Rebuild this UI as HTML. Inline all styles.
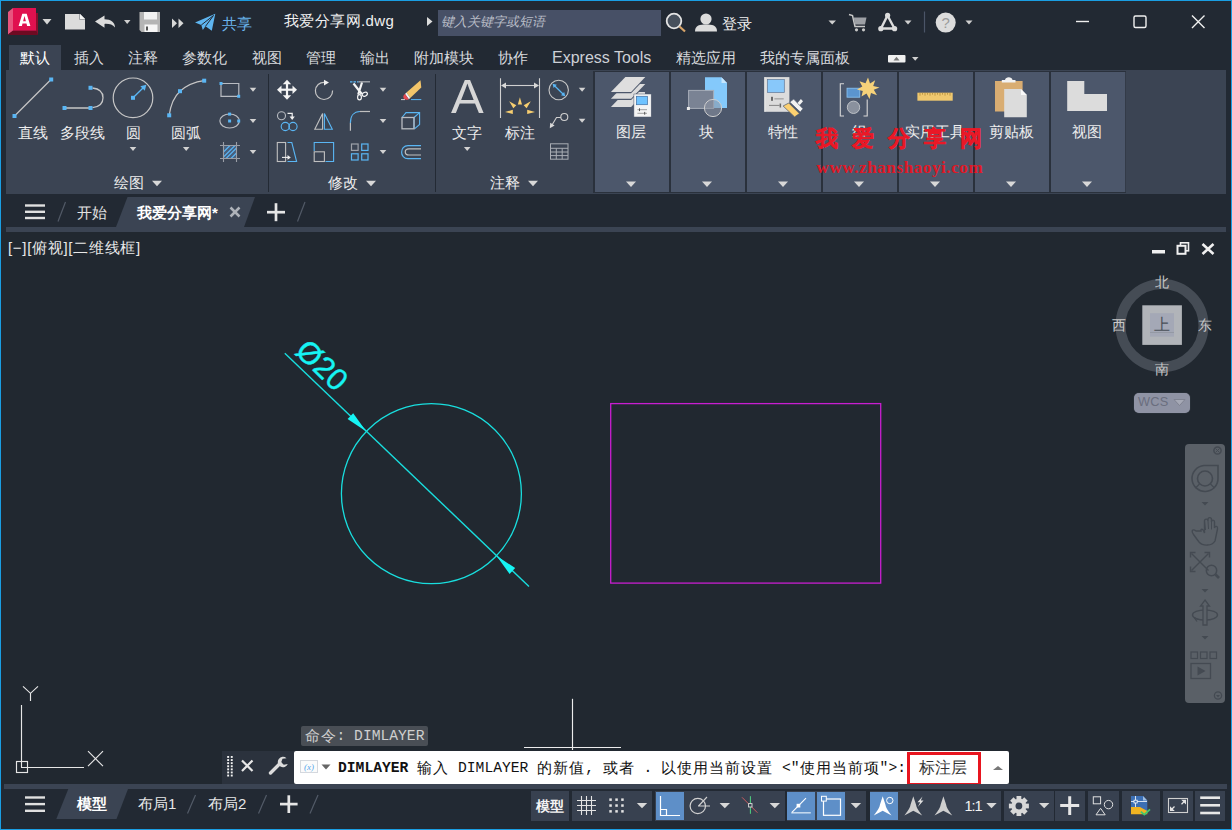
<!DOCTYPE html>
<html lang="zh">
<head>
<meta charset="utf-8">
<title>AutoCAD</title>
<style>
html,body{margin:0;padding:0;}
body{width:1232px;height:830px;overflow:hidden;background:#222933;font-family:"Liberation Sans",sans-serif;color:#e4e4e4;}
#win{position:absolute;left:0;top:0;width:1232px;height:830px;background:#222933;overflow:hidden;}
.a{position:absolute;white-space:nowrap;}
.t{position:absolute;white-space:nowrap;line-height:1;}
svg{position:absolute;overflow:visible;}
/* frame */
#bt{left:0;top:0;width:1232px;height:1px;background:#1a9ee3;}
#bl{left:0;top:0;width:1px;height:830px;background:#1a9ee3;}
#br{left:1231px;top:0;width:1px;height:830px;background:#1a9ee3;}
#bb{left:0;top:829px;width:1232px;height:1px;background:#1a9ee3;}
/* ribbon */
#rtabA{left:9px;top:45px;width:52px;height:26px;background:#3b4453;}
#ribbon{left:6px;top:70px;width:1220px;height:124px;background:#3b4453;}
.rt{top:50px;font-size:15px;color:#d8dade;}
.pb{top:72px;width:74px;height:120px;background:#4c576b;}
.sep{top:72px;width:2px;height:120px;background:#2a313c;}
.lbl{font-size:15px;color:#ededed;}
/* doc tabs */
#tabband{left:6px;top:227px;width:1220px;height:5px;background:#3b4453;}
/* drawing */
#draw{left:1px;top:232px;width:1230px;height:553px;background:#212830;}
.sb{top:791px;height:30px;background:#384150;}
.sbb{top:792px;width:28px;height:28px;background:#5e8fc8;}
.cl{top:761px;font-family:'Liberation Mono',monospace;font-size:14.670px;color:#111;}
.cc{top:760px;font-size:15px;color:#111;letter-spacing:1px;}
#stband{left:4px;top:784px;width:1223px;height:5px;background:#3b4453;}
</style>
</head>
<body>
<div id="win">

<!-- ===== TITLE BAR ===== -->
<div id="title" class="a" style="left:0;top:0;width:1232px;height:45px;">
  <div class="t" style="left:222px;top:16px;font-size:15px;color:#6ab4ec;width:30.0px;text-align:center;">共享</div>
  <div class="t" style="left:284px;top:13px;font-size:15px;letter-spacing:0.400px;color:#f0f0f0;width:110.3px;text-align:center;">我爱分享网.dwg</div>
  <div class="a" style="left:438px;top:10px;width:223px;height:26px;background:#475066;"></div>
  <div class="t" style="left:441px;top:15px;font-size:13px;font-style:italic;color:#b9bdc6;width:104.0px;text-align:center;">键入关键字或短语</div>
  <div class="t" style="left:722px;top:16px;font-size:15px;color:#f0f0f0;width:30.0px;text-align:center;">登录</div>
  
  <svg style="left:0;top:0;" width="1232" height="45">
    <!-- A logo -->
    <polygon points="8,12 13,8 13,31 8,34.500" fill="#e8557e"/>
    <polygon points="8,34.500 13,30.500 36,30.500 38,35 11,35" fill="#6e0a22"/>
    <polygon points="36,13 38,13 38,35 36,30.500" fill="#8a0e2c"/>
    <rect x="13" y="8" width="23" height="22.700" fill="#e0114f"/>
    <path d="M18.600,26 L22.300,13.800 L26.700,13.800 L30.400,26 L27.100,26 L26.500,23.600 L22.500,23.600 L21.900,26 Z M23.100,21.200 L25.900,21.200 L24.500,16 Z" fill="#ffffff" fill-rule="evenodd"/>
    <polygon points="42.500,19 51.500,19 47,24.500" fill="#d6d6d6"/>
    <!-- new -->
    <path d="M65,14 L80,14 L85,19 L85,29.500 L65,29.500 Z" fill="#dcdcdc"/>
    <path d="M80,14 L80,19 L85,19 Z" fill="#f6f6f6"/>
    <path d="M79.500,14 L79.500,19.500 L85,19.500" fill="none" stroke="#8e9196" stroke-width="0.8"/>
    <!-- undo -->
    <path d="M95,21.500 L104.500,15.500 L104.500,19.300 C111,19.300 115,22.500 115,27.500 C112.500,24.500 109.500,23.700 104.500,23.900 L104.500,27.800 Z" fill="#dcdcdc"/>
    <polygon points="124,20 130.500,20 127.200,24" fill="#d0d0d0"/>
    <!-- save -->
    <path d="M139.500,12 L160,12 L160,32 L141.500,32 L139.500,30 Z" fill="#b4b4b4"/>
    <rect x="144" y="12" width="13" height="7.500" fill="#f2f2f2"/>
    <rect x="144.500" y="24.500" width="13" height="7.500" fill="#f6f6f6"/>
    <rect x="146" y="26.500" width="2" height="4" fill="#555"/>
    <!-- >> -->
    <polygon points="172,18.500 177,23.300 172,28" fill="#d8d8d8"/>
    <polygon points="178.500,18.500 183.500,23.300 178.500,28" fill="#d8d8d8"/>
    <!-- share plane -->
    <path d="M195,22.500 L215.300,13.800 L211.800,30.800 L205.500,26.300 L202.800,30 L201.300,25 Z" fill="#5eb5f0"/>
    <path d="M201.300,25 L213.500,15.500 L205.500,26.300" fill="none" stroke="#222933" stroke-width="1"/>
    <polygon points="427,17 432.500,21.500 427,26" fill="#dcdcdc"/>
    <!-- search -->
    <circle cx="674" cy="21" r="7.300" fill="#47505c" stroke="#e4e4e4" stroke-width="1.8"/>
    <line x1="679.500" y1="26.500" x2="685" y2="31.500" stroke="#d8a469" stroke-width="2.200"/>
    <!-- person -->
    <circle cx="706" cy="19" r="5.600" fill="#dcdcdc"/>
    <path d="M695,31.500 C695,25 700,24.500 706,24.500 C712,24.500 717,25 717,31.500 Z" fill="#dcdcdc"/>
    <polygon points="828.500,20.500 836,20.500 832.200,24.500" fill="#d0d0d0"/>
    <!-- cart -->
    <path d="M849,14.500 L852.500,15.500 L855,26.500 L865,26.500" fill="none" stroke="#c8c8c8" stroke-width="1.500"/>
    <polygon points="853.500,17.500 866.500,17.500 865,24.500 855,24.500" fill="#9da0a5"/>
    <circle cx="856.500" cy="29.800" r="1.600" fill="#c8c8c8"/><circle cx="863.500" cy="29.800" r="1.600" fill="#c8c8c8"/>
    <!-- app triangle -->
    <path d="M887.500,15.500 L881,28.500 L894.500,28.500 Z" fill="none" stroke="#dcdcdc" stroke-width="2.400" stroke-linejoin="round"/>
    <circle cx="887.600" cy="15.300" r="2.600" fill="#dcdcdc"/><circle cx="880.800" cy="28.700" r="2.600" fill="#dcdcdc"/><circle cx="894.600" cy="28.700" r="2.600" fill="#dcdcdc"/>
    <polygon points="904.500,20.500 911.500,20.500 908,24.500" fill="#d0d0d0"/>
    <line x1="924.500" y1="11.500" x2="924.500" y2="32.500" stroke="#4b5567" stroke-width="1.200"/>
    <!-- help -->
    <circle cx="945.700" cy="22.600" r="10" fill="#dcdcdc"/>
    <text x="945.700" y="28" text-anchor="middle" font-family="Liberation Sans" font-size="15" fill="#9a9a9a">?</text>
    <polygon points="965.500,20.500 972.500,20.500 969,24.500" fill="#d0d0d0"/>
    <!-- window controls -->
    <line x1="1076" y1="21.500" x2="1089" y2="21.500" stroke="#f0f0f0" stroke-width="1.400"/>
    <rect x="1134" y="16" width="12" height="11.500" rx="1.500" fill="none" stroke="#f0f0f0" stroke-width="1.400"/>
    <path d="M1192,15.500 L1204.500,28 M1204.500,15.500 L1192,28" stroke="#f0f0f0" stroke-width="1.400" fill="none"/>
  </svg>

</div>

<!-- ===== RIBBON TABS ===== -->
<div id="rtabA" class="a"></div>
<div class="t rt" style="left:20px;color:#ffffff;width:30.0px;text-align:center;">默认</div>
<div class="t rt" style="left:74px;width:30.0px;text-align:center;">插入</div>
<div class="t rt" style="left:128px;width:30.0px;text-align:center;">注释</div>
<div class="t rt" style="left:182px;width:45.0px;text-align:center;">参数化</div>
<div class="t rt" style="left:252px;width:30.0px;text-align:center;">视图</div>
<div class="t rt" style="left:306px;width:30.0px;text-align:center;">管理</div>
<div class="t rt" style="left:360px;width:30.0px;text-align:center;">输出</div>
<div class="t rt" style="left:414px;width:60.0px;text-align:center;">附加模块</div>
<div class="t rt" style="left:498px;width:30.0px;text-align:center;">协作</div>
<div class="t rt" style="left:552px;font-size:16px;top:50px;color:#cdd0d6;width:99.3px;text-align:center;">Express Tools</div>
<div class="t rt" style="left:676px;width:60.0px;text-align:center;">精选应用</div>
<div class="t rt" style="left:760px;width:90.0px;text-align:center;">我的专属面板</div>

<svg style="left:0;top:45px;" width="1232" height="26">
  <rect x="888" y="10" width="17.500" height="7.500" rx="1" fill="#f0f0f0"/>
  <polygon points="893.500,15.500 899.500,15.500 896.500,11.800" fill="#777"/>
  <polygon points="912,12 918.500,12 915.200,15.800" fill="#d0d0d0"/>
</svg>


<!-- ===== RIBBON ===== -->
<div id="ribbon" class="a"></div>
<div class="a sep" style="left:268px;top:74px;height:118px;width:1px;background:#232a34;"></div>
<div class="a sep" style="left:435px;top:74px;height:118px;width:1px;background:#232a34;"></div>
<div class="a" style="left:593px;top:71px;width:533px;height:122px;background:#2a313c;"></div>
<div class="a pb" style="left:595px;"></div>
<div class="a pb" style="left:671px;"></div>
<div class="a pb" style="left:747px;"></div>
<div class="a pb" style="left:823px;"></div>
<div class="a pb" style="left:899px;"></div>
<div class="a pb" style="left:975px;"></div>
<div class="a pb" style="left:1051px;"></div>
<div class="a" style="left:593px;top:72px;width:2px;height:120px;background:#2a313c;"></div>
<div class="a" style="left:669px;top:72px;width:2px;height:120px;background:#2a313c;"></div>
<div class="a" style="left:745px;top:72px;width:2px;height:120px;background:#2a313c;"></div>
<div class="a" style="left:821px;top:72px;width:2px;height:120px;background:#2a313c;"></div>
<div class="a" style="left:897px;top:72px;width:2px;height:120px;background:#2a313c;"></div>
<div class="a" style="left:973px;top:72px;width:2px;height:120px;background:#2a313c;"></div>
<div class="a" style="left:1049px;top:72px;width:2px;height:120px;background:#2a313c;"></div>
<div class="a" style="left:1125px;top:72px;width:1px;height:120px;background:#333b48;"></div>

<div class="t lbl" style="left:18px;top:125px;width:30.0px;text-align:center;">直线</div>
<div class="t lbl" style="left:60px;top:125px;width:45.0px;text-align:center;">多段线</div>
<div class="t lbl" style="left:126px;top:125px;width:15.0px;text-align:center;">圆</div>
<div class="t lbl" style="left:171px;top:125px;width:30.0px;text-align:center;">圆弧</div>
<div class="t lbl" style="left:114px;top:175px;width:30.0px;text-align:center;">绘图</div>
<div class="t lbl" style="left:328px;top:175px;width:30.0px;text-align:center;">修改</div>
<div class="t lbl" style="left:452px;top:125px;width:30.0px;text-align:center;">文字</div>
<div class="t lbl" style="left:505px;top:125px;width:30.0px;text-align:center;">标注</div>
<div class="t lbl" style="left:490px;top:175px;width:30.0px;text-align:center;">注释</div>
<div class="t lbl" style="left:616px;top:124px;width:30.0px;text-align:center;">图层</div>
<div class="t lbl" style="left:699px;top:124px;width:15.0px;text-align:center;">块</div>
<div class="t lbl" style="left:768px;top:124px;width:30.0px;text-align:center;">特性</div>
<div class="t lbl" style="left:852px;top:124px;width:15.0px;text-align:center;">组</div>
<div class="t lbl" style="left:905px;top:124px;width:60.0px;text-align:center;">实用工具</div>
<div class="t lbl" style="left:989px;top:124px;width:45.0px;text-align:center;">剪贴板</div>
<div class="t lbl" style="left:1072px;top:124px;width:30.0px;text-align:center;">视图</div>

<svg id="rib1" style="left:0;top:0;" width="600" height="200">
  <defs>
    <polygon id="dd" points="-3.300,-2 3.300,-2 0,2" fill="#d2d2d2"/>
    <polygon id="ddL" points="-5,-2.700 5,-2.700 0,2.700" fill="#d8d8d8"/>
    <rect id="gp" x="-2" y="-2" width="4" height="4" fill="#5ab6f4"/>
  </defs>
  <!-- line -->
  <line x1="15" y1="115.500" x2="50.500" y2="80" stroke="#c6c6c6" stroke-width="1.200"/>
  <use href="#gp" x="14.500" y="116"/><use href="#gp" x="51.200" y="79.500"/>
  <!-- polyline -->
  <path d="M64.500,108 L90.500,108 M92.500,107.600 C99.500,106.800 103,103 103,97.700 C103,92.500 99.500,88.800 92.500,88" fill="none" stroke="#c6c6c6" stroke-width="1.300"/>
  <use href="#gp" x="64.500" y="108"/><use href="#gp" x="90.500" y="108"/><use href="#gp" x="90.500" y="87.800"/>
  <!-- circle -->
  <circle cx="133" cy="97.800" r="19.800" fill="none" stroke="#c6c6c6" stroke-width="1.200"/>
  <line x1="133" y1="97.800" x2="143.500" y2="87.500" stroke="#5ab6f4" stroke-width="1.300"/>
  <polygon points="146.300,84.800 144.800,90.800 140.300,86.300" fill="#5ab6f4"/>
  <use href="#gp" x="133" y="97.800"/>
  <!-- arc -->
  <path d="M169.200,115.300 C171,102 177,94 180,91.200 C186,86 194,82 204,80.700" fill="none" stroke="#c6c6c6" stroke-width="1.200"/>
  <use href="#gp" x="169.200" y="115.300"/><use href="#gp" x="180" y="91.200"/><use href="#gp" x="204.200" y="80.700"/>
  <use href="#dd" x="133" y="149"/><use href="#dd" x="186.200" y="149"/>
  <use href="#ddL" x="157" y="183.500"/><use href="#ddL" x="371" y="183.500"/><use href="#ddL" x="533" y="183.500"/>
  <!-- small draw: rect -->
  <path d="M221,83.500 L238.800,83.500 L238.800,96.300 L221,96.300 Z" fill="none" stroke="#b9bcc2" stroke-width="1.200"/>
  <rect x="219.500" y="82" width="3" height="3" fill="#5ab6f4"/><rect x="237.200" y="94.800" width="3" height="3" fill="#5ab6f4"/>
  <use href="#dd" x="253" y="89.800"/>
  <!-- ellipse -->
  <ellipse cx="229.600" cy="121" rx="9.700" ry="7" fill="none" stroke="#b9bcc2" stroke-width="1.200"/>
  <rect x="228.100" y="112.600" width="3" height="3" fill="#5ab6f4"/><rect x="228.100" y="119.500" width="3" height="3" fill="#5ab6f4"/><rect x="237.200" y="119.500" width="3" height="3" fill="#5ab6f4"/>
  <use href="#dd" x="253" y="121"/>
  <!-- hatch -->
  <rect x="223.500" y="145.500" width="13" height="13" fill="#475f7c"/>
  <path d="M223.500,152 L230,145.500 M223.500,157 L235,145.500 M226,158.500 L236.500,148 M231,158.500 L236.500,153" stroke="#5ab6f4" stroke-width="1.100" fill="none"/>
  <path d="M220,145.500 L240,145.500 M220,158.500 L240,158.500 M223.500,142 L223.500,162 M236.500,142 L236.500,162" stroke="#9a9ea6" stroke-width="1.100" fill="none"/>
  <use href="#dd" x="253" y="152"/>
  <!-- move -->
  <g fill="#f4f4f4"><rect x="280" y="88.600" width="14" height="2.200"/><rect x="285.900" y="83" width="2.200" height="14"/>
  <polygon points="277,89.700 281.500,85.500 281.500,93.900"/><polygon points="297,89.700 292.500,85.500 292.500,93.900"/><polygon points="287,79.700 282.800,84.200 291.200,84.200"/><polygon points="287,99.700 282.800,95.200 291.200,95.200"/></g>
  <!-- rotate -->
  <path d="M324.500,82.300 A8.600,8.600 0 1 0 332.600,90.600" fill="none" stroke="#c6c6c6" stroke-width="1.200"/>
  <polygon points="324,79.700 329,82.600 324,85.400" fill="#f0f0f0"/>
  <!-- trim -->
  <line x1="350" y1="81.800" x2="358.500" y2="81.800" stroke="#5ab6f4" stroke-width="1.300" stroke-dasharray="2.500 1"/>
  <line x1="358.500" y1="81.800" x2="370" y2="81.800" stroke="#a8acb2" stroke-width="1.300"/>
  <path d="M353.500,83.500 L361.800,94 M362,82.500 L358.200,94.500" stroke="#f4f4f4" stroke-width="2.200" fill="none"/>
  <ellipse cx="359.500" cy="97.200" rx="1.900" ry="2.600" fill="none" stroke="#f4f4f4" stroke-width="1.200"/>
  <ellipse cx="364.800" cy="94.200" rx="2.700" ry="1.900" fill="none" stroke="#f4f4f4" stroke-width="1.200" transform="rotate(-25 364.800 94.200)"/>
  <use href="#dd" x="383" y="89.800"/>
  <!-- erase -->
  <polygon points="406.500,92.500 420.500,80.200 421.300,87.500 410.200,98" fill="#f2c469"/>
  <polygon points="406.500,92.500 410.200,98 408.800,99.200 405,94" fill="#f4f4f4"/>
  <path d="M405,94 L408.800,99.200 C406.500,100.500 403.500,99.500 403.300,97 C403.300,95.500 404,94.600 405,94 Z" fill="#ea4a52"/>
  <line x1="401" y1="99.600" x2="405" y2="99.600" stroke="#d0d0d0" stroke-width="1"/>
  <line x1="411" y1="99.600" x2="421.300" y2="99.600" stroke="#5ab6f4" stroke-width="1"/>
  <!-- copy -->
  <circle cx="281.500" cy="115.700" r="4" fill="none" stroke="#b9bcc2" stroke-width="1.100"/>
  <path d="M287.500,113.300 L292.200,113.300 L292.200,117" fill="none" stroke="#f0f0f0" stroke-width="1.200"/>
  <polygon points="289.600,116.500 294.800,116.500 292.200,120" fill="#f0f0f0"/>
  <circle cx="285.300" cy="126.500" r="4.100" fill="none" stroke="#5ab6f4" stroke-width="1.100"/><circle cx="293" cy="126.500" r="4.100" fill="none" stroke="#5ab6f4" stroke-width="1.100"/>
  <!-- mirror -->
  <polygon points="322.600,113.500 322.600,129.300 314.800,129.300" fill="none" stroke="#c0c0c0" stroke-width="1.100"/>
  <polygon points="324.400,113.500 324.400,129.300 332.300,129.300" fill="none" stroke="#5ab6f4" stroke-width="1.100"/>
  <!-- fillet -->
  <line x1="350.400" y1="123" x2="350.400" y2="130.800" stroke="#c0c0c0" stroke-width="1.200"/>
  <path d="M350.400,123 C350.400,116 354,111.500 360,111.500" fill="none" stroke="#5ab6f4" stroke-width="1.200"/>
  <line x1="360" y1="111.500" x2="370" y2="111.500" stroke="#c0c0c0" stroke-width="1.200"/>
  <use href="#dd" x="383" y="121"/>
  <!-- box -->
  <path d="M402,117.500 L406,112.600 L419.600,112.600 L419.600,124.500 L414.500,128.800" fill="none" stroke="#5ab6f4" stroke-width="1.100"/>
  <path d="M414,117.500 L419.600,112.600 M414,117.500 L414,128.800" fill="none" stroke="#5ab6f4" stroke-width="1.100"/>
  <rect x="402" y="117.500" width="12" height="11.300" fill="none" stroke="#b9bcc2" stroke-width="1.300"/>
  <!-- stretch -->
  <rect x="277.300" y="142.500" width="8.300" height="19" fill="none" stroke="#c0c0c0" stroke-width="1.100"/>
  <path d="M287.500,142.500 L291.800,142.500 L296.600,161.500 L287.500,161.500" fill="none" stroke="#5ab6f4" stroke-width="1.100"/>
  <line x1="282" y1="157.400" x2="288" y2="157.400" stroke="#f0f0f0" stroke-width="1.100"/><polygon points="287.500,155 290.800,157.400 287.500,159.800" fill="#f0f0f0"/>
  <!-- scale -->
  <path d="M314.200,151 L314.200,142.500 L333.600,142.500 L333.600,161.500 L325.500,161.500" fill="none" stroke="#5ab6f4" stroke-width="1.100"/>
  <rect x="314.200" y="151.800" width="10.200" height="9.700" fill="none" stroke="#c0c0c0" stroke-width="1.100"/>
  <!-- array -->
  <rect x="351.500" y="144" width="6.600" height="6.400" fill="none" stroke="#9ea2aa" stroke-width="1.200"/>
  <rect x="361.700" y="144" width="6.300" height="6.400" fill="none" stroke="#5ab6f4" stroke-width="1.200"/>
  <rect x="351.500" y="153.800" width="6.600" height="6.200" fill="none" stroke="#5ab6f4" stroke-width="1.200"/>
  <rect x="361.700" y="153.800" width="6.300" height="6.200" fill="none" stroke="#5ab6f4" stroke-width="1.200"/>
  <use href="#dd" x="383" y="152"/>
  <!-- offset -->
  <path d="M421,145.600 L408,145.600 C399.500,145.600 399.500,158.700 408,158.700 L421,158.700" fill="none" stroke="#5ab6f4" stroke-width="1.200"/>
  <path d="M421,148.900 L409,148.900 C404,148.900 404,155 409,155 L421,155" fill="none" stroke="#c0c0c0" stroke-width="1.200"/>
</svg>


<div class="t" style="left:451px;top:72px;font-size:49px;line-height:49px;color:#d6d6d6;width:32.7px;text-align:center;">A</div>
<svg id="rib2" style="left:0;top:0;" width="1232" height="200">
  <!-- dim icon -->
  <path d="M500.500,78.300 L500.500,118 M539.500,78.300 L539.500,118" stroke="#d0d0d0" stroke-width="1.100" fill="none"/>
  <line x1="504" y1="85.500" x2="536" y2="85.500" stroke="#d0d0d0" stroke-width="1.100"/>
  <polygon points="501,85.500 506,82.500 506,88.500" fill="#d8d8d8"/><polygon points="539,85.500 534,82.500 534,88.500" fill="#d8d8d8"/>
  <g fill="#f8cf70">
    <polygon points="517.800,104.500 519.900,97.200 522,104.500"/>
    <polygon points="513.300,108.200 509.200,101.200 516.300,105.200"/>
    <polygon points="526.600,108.200 530.800,101.200 523.700,105.200"/>
    <polygon points="512.800,113.900 505,112 512.800,109.800"/>
    <polygon points="527.200,113.900 535,112 527.200,109.800"/>
  </g>
  <use href="#dd" x="467.200" y="149"/>
  <!-- diameter -->
  <circle cx="558.700" cy="90" r="9.700" fill="none" stroke="#c6c6c6" stroke-width="1.100"/>
  <line x1="554" y1="85.200" x2="563.800" y2="94.800" stroke="#5ab6f4" stroke-width="1.200"/>
  <polygon points="552.600,83.800 556.800,84.800 553.600,88" fill="#5ab6f4"/><polygon points="565.200,96.200 561,95.200 564.200,92" fill="#5ab6f4"/>
  <use href="#dd" x="582.100" y="89.800"/>
  <!-- leader -->
  <circle cx="564.300" cy="117" r="3.500" fill="none" stroke="#d0d0d0" stroke-width="1.100"/>
  <path d="M560.800,117.500 L556.500,117.500 L552,125" fill="none" stroke="#d0d0d0" stroke-width="1.100"/>
  <polygon points="549.800,128.300 550.200,122.800 554.600,125.600" fill="#d8d8d8"/>
  <use href="#dd" x="582.100" y="120.800"/>
  <!-- table -->
  <g fill="none" stroke="#a9adb4" stroke-width="1"><rect x="550.500" y="143.800" width="17.500" height="15.400"/>
  <path d="M550.500,148.300 L568,148.300 M550.500,152 L568,152 M550.500,155.600 L568,155.600 M556.300,148.300 L556.300,159.200 M562.200,148.300 L562.200,159.200"/></g>

  <!-- LAYER panel -->
  <polygon points="625.400,92 645.300,92 631.100,106.900 610.900,106.900" fill="#dcdcdc"/>
  <polygon points="625.400,85.400 645.300,85.400 631.100,100 610.900,100" fill="#4c576b"/>
  <polygon points="625.400,84 645.300,84 631.100,98.700 610.900,98.700" fill="#dcdcdc"/>
  <polygon points="625.400,78.500 645.300,78.500 631.100,93.200 610.900,93.200" fill="#4c576b"/>
  <polygon points="625.400,77.100 645.300,77.100 631.100,91.900 610.900,91.900" fill="#dedede"/>
  <rect x="639" y="92.300" width="6" height="2.500" fill="#dedede"/>
  <rect x="633.900" y="94" width="17.300" height="23" fill="#f4f4f4" stroke="#4c576b" stroke-width="0.500"/>
  <rect x="636.400" y="96.300" width="11" height="8.400" fill="#6fc3ff" stroke="#3f6fa3" stroke-width="0.700"/>
  <path d="M637.400,109.700 L647,109.700 M637.400,113.300 L647,113.300" stroke="#7a7a7a" stroke-width="0.700"/>
  <path d="M639.500,108.300 L639.500,111.100 M644.700,111.900 L644.700,114.700" stroke="#555" stroke-width="1"/>
  <use href="#ddL" x="631" y="184.300"/>
  <!-- BLOCK panel -->
  <path d="M705,77.200 L721.500,77.200 L727,83 L727,108 L705,108 Z" fill="#84c9fb"/>
  <path d="M721.500,77.200 L721.500,83 L727,83 Z" fill="#c6e6fd"/>
  <rect x="688.600" y="90.400" width="25" height="18" fill="#7a8394" stroke="#a7adb9" stroke-width="1"/>
  <circle cx="713" cy="108" r="8.600" fill="#8d93a2" fill-opacity="0.550" stroke="#cdcdcd" stroke-width="1"/>
  <rect x="686.900" y="107" width="3" height="3" fill="#ececec"/>
  <use href="#ddL" x="707" y="184.300"/>
  <!-- PROPERTIES panel -->
  <rect x="764.400" y="77.100" width="25" height="34.700" fill="#dcdcdc"/>
  <rect x="764.400" y="77.100" width="1" height="34.700" fill="#ebebeb"/>
  <rect x="767.500" y="79.600" width="16.800" height="12.800" fill="#88c8fa" stroke="#5e7898" stroke-width="0.700"/>
  <path d="M774.400,98.800 L783.700,98.800" stroke="#ababab" stroke-width="1.500"/>
  <rect x="771" y="96.800" width="2" height="4" fill="#6a6a6a"/>
  <path d="M769,105.400 L779.500,105.400" stroke="#7c7c7c" stroke-width="0.900"/>
  <rect x="779.600" y="103.500" width="1.500" height="4" fill="#6a6a6a"/>
  <g stroke="#4c576b" stroke-width="0.700">
  <polygon points="783.100,106 788.800,103 799.400,113.600 794.600,116.900" fill="#fcd070"/>
  <polygon points="789.700,102.100 793.700,99.100 803,108.700 800.300,112.100" fill="#f2f2f2"/>
  <polygon points="797.500,103 800.900,99.100 803,101.200 799.800,105" fill="#f2f2f2" stroke="none"/>
  </g>
  <use href="#ddL" x="783" y="184.300"/>
  <!-- GROUP panel -->
  <path d="M844,83.800 L840.300,83.800 L840.300,116 L844,116 M863.500,116 L867.200,116 L867.200,99.500" fill="none" stroke="#d8d8d8" stroke-width="1.100"/>
  <rect x="847" y="88.200" width="12.800" height="9" fill="#5b95cf" stroke="#8cc6f4" stroke-width="0.800"/>
  <circle cx="853.500" cy="107.300" r="6.200" fill="#8a919e" stroke="#c4c7cc" stroke-width="0.900"/>
  <polygon fill="#f6d27a" points="868,77.500 870,83.500 875.200,80.200 873.200,86 879.500,87.600 873.800,89.800 877,95.200 871,93 869.500,99 866.500,93.500 861.500,96.500 862.800,91 857,89.500 862.300,86.500 859.500,81.200 865.500,83.200"/>
  <use href="#ddL" x="859" y="184.300"/>
  <!-- UTIL panel -->
  <rect x="917.400" y="92.700" width="35.300" height="8" fill="#f0c86e"/>
  <path d="M920,92.700 v3 M922.500,92.700 v2 M925,92.700 v3 M927.500,92.700 v2 M930,92.700 v3 M932.500,92.700 v2 M935,92.700 v3 M937.500,92.700 v2 M940,92.700 v3 M942.500,92.700 v2 M945,92.700 v3 M947.500,92.700 v2 M950,92.700 v3" stroke="#b08c3c" stroke-width="0.800"/>
  <use href="#ddL" x="935" y="184.300"/>
  <!-- CLIPBOARD panel -->
  <rect x="995" y="81" width="27.600" height="30.500" fill="#d9ad72"/>
  <path d="M1001.800,82.500 L1001.800,80 L1005,80 C1005.500,76.300 1012,76.300 1012.500,80 L1015.500,80 L1015.500,82.500 Z" fill="#f2f2f2"/>
  <path d="M1004.200,89 L1021,89 L1026.800,95 L1026.800,117.200 L1004.200,117.200 Z" fill="#dcdcdc"/>
  <path d="M1021,89 L1021,95 L1026.800,95 Z" fill="#f8f8f8"/>
  <use href="#ddL" x="1011" y="184.300"/>
  <!-- VIEW panel -->
  <path d="M1067.200,81 L1084.300,81 L1084.300,94 L1107,94 L1107,111 L1067.200,111 Z" fill="#dcdcdc"/>
  <use href="#ddL" x="1087" y="184.300"/>
</svg>


<!-- watermark -->
<div class="t" style="left:816px;top:127.500px;font-family:'Liberation Serif',serif;font-weight:bold;font-size:22px;color:#ea1826;letter-spacing:14px;-webkit-text-stroke:0.500px #ea1826;width:180.0px;text-align:center;">我爱分享网</div>
<div class="t" style="left:816.500px;top:159px;font-family:'Liberation Serif',serif;font-weight:bold;font-size:17px;color:#e01826;letter-spacing:0.600px;width:166.7px;text-align:center;">www.zhanshaoyi.com</div>

<!-- ===== DOC TABS ===== -->
<div id="tabband" class="a"></div>
<svg style="left:0;top:194px;" width="330" height="38">
  <polygon points="127.5,3 255,3 244,33 116,33" fill="#3b4453"/>
  <line x1="65.500" y1="8" x2="58" y2="27.500" stroke="#525a67" stroke-width="1.200"/>
  <line x1="305" y1="8" x2="297.500" y2="27.500" stroke="#525a67" stroke-width="1.200"/>
  <g stroke="#e0e0e0" stroke-width="2.400"><line x1="25" y1="11.500" x2="45" y2="11.500"/><line x1="25" y1="17.800" x2="45" y2="17.800"/><line x1="25" y1="24" x2="45" y2="24"/></g>
  <g stroke="#aeb2b9" stroke-width="2.500"><line x1="230.500" y1="13.500" x2="239.500" y2="22.500"/><line x1="239.500" y1="13.500" x2="230.500" y2="22.500"/></g>
  <g stroke="#e6e6e6" stroke-width="2.700"><line x1="267" y1="18.200" x2="285" y2="18.200"/><line x1="276" y1="9.200" x2="276" y2="27.200"/></g>
</svg>
<div class="t" style="left:77px;top:205px;font-size:15px;color:#e2e2e2;width:30.0px;text-align:center;">开始</div>
<div class="t" style="left:137px;top:205px;font-size:15px;font-weight:bold;color:#ffffff;width:80.8px;text-align:center;">我爱分享网*</div>

<!-- ===== DRAWING ===== -->
<div id="draw" class="a"></div>
<div class="t" style="left:8px;top:240px;font-size:15px;color:#e8e8e8;letter-spacing:0.700px;width:132.9px;text-align:center;">[−][俯视][二维线框]</div>
<svg id="dwg" style="left:0;top:0;" width="1232" height="830">
  <g transform="translate(0.400,0.600)">
  <circle cx="431" cy="493" r="90" fill="none" stroke="#19dede" stroke-width="1.3"/>
  <line x1="284.400" y1="352.700" x2="528.600" y2="586" stroke="#19dede" stroke-width="1.400"/>
  <polygon points="365.900,430.800 347.200,418.500 352.800,412.700" fill="#16f4f4"/>
  <polygon points="496.100,555.200 509.200,573.300 514.800,567.500" fill="#16f4f4"/>
  </g><rect x="610.700" y="403.600" width="270" height="179.500" fill="none" stroke="#c81ed0" stroke-width="1.300"/><g>
  <text x="0" y="0" transform="translate(294,352.800) rotate(43.700)" font-family="Liberation Sans" font-size="30.500" fill="#16f4f4" stroke="#16f4f4" stroke-width="0.400">Ø20</text>
  </g>
  <!-- crosshair -->
  <line x1="572.500" y1="698.800" x2="572.500" y2="750" stroke="#ececec" stroke-width="1.150"/>
  <line x1="524" y1="747.500" x2="621" y2="747.500" stroke="#ececec" stroke-width="1.150"/>
  <!-- ucs -->
  <g stroke="#e6e6e6" stroke-width="1.150" fill="none">
    <line x1="21.500" y1="705" x2="21.500" y2="767.500"/>
    <line x1="21" y1="767.500" x2="84" y2="767.500"/>
    <rect x="16.500" y="761.500" width="11" height="11"/>
    <path d="M23,686.300 L30.500,693.300 L38,686.300 M30.500,693.300 L30.500,701"/>
    <path d="M88,751.200 L103,766.200 M103,751.200 L88,766.200"/>
  </g>
</svg>

<svg id="vc" style="left:0;top:0;" width="1232" height="720">
  <!-- viewport controls -->
  <rect x="1152" y="250" width="13" height="3.500" fill="#f0f0f0"/>
  <rect x="1180.500" y="242.800" width="8" height="8" fill="none" stroke="#f0f0f0" stroke-width="1.600"/>
  <rect x="1177.500" y="245.800" width="8" height="8" fill="#212830" stroke="#f0f0f0" stroke-width="2"/>
  <path d="M1202.500,244 L1213.500,254 M1213.500,244 L1202.500,254" stroke="#f0f0f0" stroke-width="2.600" fill="none"/>
  <!-- compass -->
  <circle cx="1162" cy="325.500" r="41.500" fill="none" stroke="#454c55" stroke-width="10"/>
  <rect x="1142.300" y="305.300" width="39.600" height="39.600" fill="#b1b4b9"/>
  <rect x="1150" y="313.200" width="24" height="23.500" fill="#a4a8b6"/>
  <path d="M1150,332.500 L1174,332.500" stroke="#8a8e98" stroke-width="0.600"/>
</svg>
<div class="t" style="left:1154px;top:317px;font-family:'Liberation Serif',serif;font-size:16px;color:#4a5058;width:16.0px;text-align:center;">上</div>
<div class="t" style="left:1155px;top:276px;font-family:'Liberation Serif',serif;font-size:14px;color:#c9c9c9;width:14.0px;text-align:center;">北</div>
<div class="t" style="left:1112px;top:319px;font-family:'Liberation Serif',serif;font-size:14px;color:#c9c9c9;width:14.0px;text-align:center;">西</div>
<div class="t" style="left:1198px;top:319px;font-family:'Liberation Serif',serif;font-size:14px;color:#c9c9c9;width:14.0px;text-align:center;">东</div>
<div class="t" style="left:1155px;top:363px;font-family:'Liberation Serif',serif;font-size:14px;color:#c9c9c9;width:14.0px;text-align:center;">南</div>
<div class="a" style="left:1134px;top:393px;width:56px;height:20px;background:#8f93a4;border-radius:5px;box-shadow:0 0 1px #6a6e7c;"></div>
<div class="t" style="left:1138px;top:396px;font-size:12.800px;color:#6a6e7e;letter-spacing:0.200px;width:30.5px;text-align:center;">WCS</div>
<svg style="left:1173px;top:398px;" width="16" height="10"><polygon points="1,1.500 12,1.500 6.500,7.500" fill="#a6a9b6" stroke="#787c8a" stroke-width="0.800"/></svg>


<div class="a" style="left:1185px;top:444px;width:40px;height:259px;background:#5a6067;border-radius:4px;"></div>
<svg id="nav" style="left:0;top:0;" width="1232" height="720">
  <g fill="none" stroke="#444a52" stroke-width="1.500">
    <circle cx="1217.500" cy="450.500" r="3.600"/><path d="M1215.500,448.500 L1219.500,452.500 M1219.500,448.500 L1215.500,452.500" stroke-width="1"/>
    <!-- wheel -->
    <path d="M1204,465.500 L1218,465.500 L1218,478 A13,13 0 1 1 1204,465.500 Z" stroke-width="1.600"/>
    <circle cx="1205" cy="478.500" r="7.500" stroke-width="1.600"/>
    <path d="M1199.500,484 L1195.500,488 M1210.500,484 L1214.500,488" stroke-width="1.200"/>
    <!-- hand -->
    <path d="M1196,531 C1192,528 1191,531.500 1193.500,534.500 L1199,542 C1203,546.500 1212,546 1215,541 L1217.500,529 C1218,526 1215,525.500 1214.500,528 L1214.500,522 C1214.500,519.500 1211.500,519.500 1211.500,522 L1211.500,519.500 C1211.500,517 1208,517 1208,519.500 L1208,521 C1208,518.500 1204.500,518.500 1204.500,521 L1204.500,533 C1203,528 1200.500,528.500 1201,531 Z" stroke-width="1.400"/>
    <path d="M1204.500,521 L1205.500,530 M1208,521 L1208.500,529 M1211.500,522 L1211.500,529.500" stroke-width="1"/>
    <!-- zoom extents -->
    <path d="M1191.500,553.500 L1208.500,570.500 M1208.500,553.500 L1191.500,570.500" stroke-width="1.400"/>
    <path d="M1190.500,557.500 L1190.500,552.500 L1195.500,552.500 M1204.500,552.500 L1209.500,552.500 L1209.500,557.500 M1190.500,566.500 L1190.500,571.500 L1195.500,571.500" stroke-width="1.400"/>
    <circle cx="1211.500" cy="570.500" r="5.200" stroke-width="1.500"/>
    <path d="M1215.500,574.500 L1219,578" stroke-width="2.600"/>
    <!-- orbit -->
    <ellipse cx="1205" cy="615" rx="12.500" ry="5" stroke-width="1.400"/>
    <path d="M1205,600 L1209.500,606 L1207,606 L1207,625 L1203,625 L1203,606 L1200.500,606 Z" fill="#5a6067" stroke-width="1.300"/>
    <path d="M1198,619.500 L1194,617.500 L1197,621.500" stroke-width="1.200"/>
    <!-- showmotion -->
    <rect x="1191" y="652" width="6.500" height="6.500" stroke-width="1.200"/><rect x="1200.500" y="652" width="6.500" height="6.500" stroke-width="1.200"/><rect x="1210" y="652" width="6.500" height="6.500" stroke-width="1.200"/>
    <rect x="1191" y="663.500" width="19.500" height="15" stroke-width="1.300"/>
    <circle cx="1218" cy="695.500" r="3.600" stroke-width="1.300"/>
  </g>
  <g fill="#444a52">
    <polygon points="1201.500,502 1208.500,502 1205,505.500"/>
    <polygon points="1201.500,589 1208.500,589 1205,592.500"/>
    <polygon points="1201.500,636 1208.500,636 1205,639.500"/>
    <polygon points="1197.500,666.500 1205.500,671 1197.500,675.500"/>
    <polygon points="1216,695 1220,695 1218,697.500"/>
  </g>
</svg>


<!-- ===== COMMAND LINE ===== -->
<div class="a" style="left:301px;top:726px;width:127px;height:20px;background:#494e55;border-radius:2px;"></div>
<div class="t cc" style="left:304.500px;top:728px;color:#cfcfcf;width:32.0px;text-align:center;">命令</div><div class="t cl" style="left:336.500px;top:729px;color:#cfcfcf;">: DIMLAYER</div>
<div class="a" style="left:222px;top:751px;width:72px;height:34px;background:#2b323d;"></div>
<div class="a" style="left:294px;top:751px;width:715px;height:33px;background:#ffffff;border-radius:2px;"></div>
<div class="t cl" style="left:338px;"><b>DIMLAYER</b></div>
<div class="t cc" style="left:417.2px;width:32.0px;text-align:center;">输入</div>
<div class="t cl" style="left:458px;">DIMLAYER</div>
<div class="t cc" style="left:537.2px;width:48.0px;text-align:center;">的新值</div>
<div class="t cl" style="left:585.2px;">,</div>
<div class="t cc" style="left:602.8px;width:32.0px;text-align:center;">或者</div>
<div class="t cl" style="left:643.6px;">.</div>
<div class="t cc" style="left:661.2px;width:112.0px;text-align:center;">以使用当前设置</div>
<div class="t cl" style="left:782px;">&lt;"</div>
<div class="t cc" style="left:799.6px;width:80.0px;text-align:center;">使用当前项</div>
<div class="t cl" style="left:879.6px;">"&gt;:</div>
<div class="a" style="left:907px;top:752px;width:74px;height:34px;border:3px solid #e8151f;box-sizing:border-box;"></div>
<div class="t" style="left:918.500px;top:760px;font-size:15.500px;color:#333;width:48.0px;text-align:center;">标注层</div>
<svg id="cmdi" style="left:0;top:0;" width="1232" height="800">
  <g fill="#f2f2f2">
    <rect x="227.2" y="756.0" width="1.900" height="1.900"/>
    <rect x="230.8" y="756.0" width="1.900" height="1.900"/>
    <rect x="227.2" y="759.1" width="1.900" height="1.900"/>
    <rect x="230.8" y="759.1" width="1.900" height="1.900"/>
    <rect x="227.2" y="762.2" width="1.900" height="1.900"/>
    <rect x="230.8" y="762.2" width="1.900" height="1.900"/>
    <rect x="227.2" y="765.3" width="1.900" height="1.900"/>
    <rect x="230.8" y="765.3" width="1.900" height="1.900"/>
    <rect x="227.2" y="768.4" width="1.900" height="1.900"/>
    <rect x="230.8" y="768.4" width="1.900" height="1.900"/>
    <rect x="227.2" y="771.5" width="1.900" height="1.900"/>
    <rect x="230.8" y="771.5" width="1.900" height="1.900"/>
    <rect x="227.2" y="774.6" width="1.900" height="1.900"/>
    <rect x="230.8" y="774.6" width="1.900" height="1.900"/>
  </g>
  <path d="M242,760.500 L252.500,771 M252.500,760.500 L242,771" stroke="#e8e8e8" stroke-width="2.200" fill="none"/>
  <!-- wrench -->
  <path d="M270.500,773 L280,763.500" stroke="#dcdcdc" stroke-width="3.400" stroke-linecap="round" fill="none"/>
  <path d="M286.500,758.200 A5.200,5.200 0 1 0 287.800,764 L283.800,764.800 L281.200,762.200 L282.500,758.800 Z" fill="#dcdcdc"/>
  <!-- cmd icon -->
  <rect x="300.500" y="760.500" width="17" height="12" fill="#fbfbfb" stroke="#d4d8de" stroke-width="1"/>
  <text x="309" y="770" text-anchor="middle" font-family="Liberation Serif" font-style="italic" font-size="9" fill="#58a6ea">(x)</text>
  <polygon points="321.500,764.500 330.500,764.500 326,769.500" fill="#666"/>
  <polygon points="993,770 1003,770 998,766" fill="#777"/>
</svg>


<!-- ===== STATUS BAR ===== -->
<div id="stband" class="a"></div>

<svg id="stl" style="left:0;top:786px;" width="340" height="44">
  <polygon points="68.300,3 128,3 116.500,33 56.300,33" fill="#3b4453"/>
  <g stroke="#e0e0e0" stroke-width="2.400"><line x1="25" y1="11.500" x2="45" y2="11.500"/><line x1="25" y1="18.100" x2="45" y2="18.100"/><line x1="25" y1="24.800" x2="45" y2="24.800"/></g>
  <g stroke="#535b68" stroke-width="1.200"><line x1="195.500" y1="9" x2="187.500" y2="27.500"/><line x1="266.500" y1="9" x2="258.500" y2="27.500"/><line x1="318" y1="9" x2="310" y2="27.500"/></g>
  <g stroke="#e6e6e6" stroke-width="2.700"><line x1="280" y1="18.100" x2="297.600" y2="18.100"/><line x1="288.800" y1="9.300" x2="288.800" y2="27"/></g>
</svg>
<div class="t" style="left:77px;top:796px;font-size:15px;font-weight:bold;color:#ffffff;width:30.0px;text-align:center;">模型</div>
<div class="t" style="left:138px;top:796px;font-size:15px;color:#e6e6e6;width:38.3px;text-align:center;">布局1</div>
<div class="t" style="left:208px;top:796px;font-size:15px;color:#e6e6e6;width:38.3px;text-align:center;">布局2</div>

<div class="a sb" style="left:531px;width:38px;"></div>
<div class="a sb" style="left:572px;width:80px;"></div>
<div class="a sb" style="left:655px;width:130px;"></div>
<div class="a sb" style="left:787px;width:79px;"></div>
<div class="a sb" style="left:870px;width:131px;"></div>
<div class="a sb" style="left:1004px;width:50px;"></div>
<div class="a sb" style="left:1055px;width:30px;"></div>
<div class="a sb" style="left:1088px;width:31px;"></div>
<div class="a sb" style="left:1122px;width:38px;"></div>
<div class="a sb" style="left:1163px;width:30px;"></div>
<div class="a sb" style="left:1195px;width:30px;"></div>
<div class="a sbb" style="left:656px;"></div>
<div class="a sbb" style="left:787px;"></div>
<div class="a sbb" style="left:817px;"></div>
<div class="a sbb" style="left:870px;"></div>
<div class="t" style="left:536px;top:799px;font-size:14px;font-weight:bold;color:#f4f4f4;width:28.0px;text-align:center;">模型</div>
<div class="t" style="left:964.500px;top:799px;font-size:14.500px;color:#f4f4f4;letter-spacing:-1px;width:17.2px;text-align:center;">1:1</div>
<svg id="str" style="left:0;top:786px;" width="1232" height="44">
  <defs><polygon id="sd" points="-5.200,-2.500 5.200,-2.500 0,2.800" fill="#d8d8d8"/></defs>
  <!-- grid -->
  <path d="M577,14.500 L596,14.500 M577,19.500 L596,19.500 M577,24.500 L596,24.500 M581.500,10 L581.500,29 M586.500,10 L586.500,29 M591.500,10 L591.500,29" stroke="#e4e4e4" stroke-width="1.100" fill="none"/>
  <g fill="#e4e4e4">
    <rect x="609.3" y="12.4" width="2.500" height="2.500"/>
    <rect x="615.3" y="12.4" width="2.500" height="2.500"/>
    <rect x="621.2" y="12.4" width="2.500" height="2.500"/>
    <rect x="609.3" y="18.3" width="2.500" height="2.500"/>
    <rect x="615.3" y="18.3" width="2.500" height="2.500"/>
    <rect x="621.2" y="18.3" width="2.500" height="2.500"/>
    <rect x="609.3" y="24.1" width="2.500" height="2.500"/>
    <rect x="615.3" y="24.1" width="2.500" height="2.500"/>
    <rect x="621.2" y="24.1" width="2.500" height="2.500"/>
  </g>
  <use href="#sd" x="642" y="19.500"/>
  <!-- ortho -->
  <path d="M660.500,10 L660.500,29.500 L680,29.500 M660.500,23.500 L666.500,23.500 L666.500,29.500" stroke="#ffffff" stroke-width="1.200" fill="none"/>
  <!-- polar -->
  <circle cx="697.800" cy="20" r="7.700" fill="none" stroke="#d0d0d0" stroke-width="1.200"/>
  <path d="M698,20 L710,20 M698.500,20 L707,11" stroke="#d0d0d0" stroke-width="1.100" fill="none"/>
  <use href="#sd" x="724.800" y="19.500"/>
  <!-- isodraft -->
  <path d="M750.400,10.200 L750.400,27.800" stroke="#4fd482" stroke-width="1"/>
  <path d="M742,11.300 L757.400,26.700" stroke="#cc5c60" stroke-width="1"/>
  <rect x="748.600" y="17.600" width="3.400" height="3.400" fill="#384150" stroke="#e0e0e0" stroke-width="0.900"/>
  <use href="#sd" x="774.800" y="19.500"/>
  <!-- otrack -->
  <path d="M791.300,26.800 L810.800,26.800" stroke="#c8dcf0" stroke-width="1.500"/>
  <path d="M791.900,26.300 L806,12.200" stroke="#ffffff" stroke-width="1.100"/>
  <rect x="796.600" y="17.800" width="3.700" height="3.700" fill="#ffffff"/>
  <!-- osnap -->
  <rect x="823.500" y="13" width="17" height="16.300" fill="none" stroke="#ffffff" stroke-width="1.200"/>
  <rect x="821.500" y="10.300" width="4.800" height="4.800" fill="#5e8fc8" stroke="#ffffff" stroke-width="1"/>
  <use href="#sd" x="855.900" y="19.500"/>
  <!-- anno 1 -->
  <path transform="translate(882.700,20)" d="M0,-9.800 L2.700,-1.500 C3.200,1.500 4.500,3.500 8.900,9.500 L0,4.800 L-8.900,9.500 C-4.500,3.500 -3.200,1.500 -2.700,-1.500 Z" fill="#ffffff"/>
  <circle cx="889.800" cy="14.500" r="3.200" fill="#5e8fc8" stroke="#ffffff" stroke-width="1"/>
  <!-- anno 2 -->
  <path transform="translate(913.300,20)" d="M0,-9.800 L2.700,-1.500 C3.200,1.500 4.500,3.500 8.900,9.500 L0,4.800 L-8.900,9.500 C-4.500,3.500 -3.200,1.500 -2.700,-1.500 Z" fill="#cfcfcf"/>
  <path d="M922.500,10.500 L917.500,16.300 L920.200,16.300 L917.800,21 L923.500,14.600 L920.800,14.600 Z" fill="#e0e0e0"/>
  <!-- anno 3 -->
  <path transform="translate(943.400,20)" d="M0,-9.800 L2.700,-1.500 C3.200,1.500 4.500,3.500 8.900,9.500 L0,4.800 L-8.900,9.500 C-4.500,3.500 -3.200,1.500 -2.700,-1.500 Z" fill="#cfcfcf"/>
  <use href="#sd" x="991.500" y="19.500"/>
  <!-- gear -->
  <g transform="translate(1018.900,20)">
    <g fill="#d8d8d8">
      <rect x="-2.400" y="-10" width="4.800" height="20"/>
      <rect x="-2.400" y="-10" width="4.800" height="20" transform="rotate(45)"/>
      <rect x="-2.400" y="-10" width="4.800" height="20" transform="rotate(90)"/>
      <rect x="-2.400" y="-10" width="4.800" height="20" transform="rotate(135)"/>
      <circle r="7.400"/>
    </g>
    <circle r="3.400" fill="#384150"/>
  </g>
  <use href="#sd" x="1044.200" y="19.500"/>
  <!-- plus -->
  <path d="M1060.200,19.500 L1079.200,19.500 M1069.700,10.200 L1069.700,28.900" stroke="#e6e6e6" stroke-width="3"/>
  <!-- shapes -->
  <rect x="1093.300" y="10.800" width="7.300" height="7" fill="none" stroke="#e0e0e0" stroke-width="1"/>
  <circle cx="1108.500" cy="18.600" r="4.200" fill="none" stroke="#e0e0e0" stroke-width="1"/>
  <polygon points="1100.600,22.300 1105.200,28.800 1096,28.800" fill="none" stroke="#e0e0e0" stroke-width="1"/>
  <!-- sheet -->
  <path d="M1131,10 L1143,10 L1147.300,14.500 L1147.300,25.500 L1131,21.500 Z" fill="#3c6fb4"/>
  <path d="M1143,10 L1143,14.500 L1147.300,14.500 Z" fill="#9fbde0"/>
  <path d="M1131,21 L1140,21 L1147.300,25 L1147.300,28.200 L1131,28.200 Z" fill="#f0b322"/>
  <path d="M1135.500,10 L1135.500,21 M1131,15.500 L1147,15.500" stroke="#e6eef8" stroke-width="0.900" fill="none"/>
  <rect x="1134" y="14.200" width="3.200" height="2.800" fill="#3c6fb4" stroke="#ffffff" stroke-width="0.800"/>
  <path d="M1140.800,25.600 L1144.300,28.600 L1150,23.300" fill="none" stroke="#3fc870" stroke-width="1.800"/>
  <!-- fullscreen -->
  <rect x="1168.500" y="12.500" width="19" height="14" fill="none" stroke="#d0d0d0" stroke-width="1.100"/>
  <path d="M1181.200,13.800 L1186,13.800 L1186,18.600 Z M1170,20.200 L1170,25 L1174.800,25 Z" fill="#e4e4e4"/><path d="M1181.500,18.300 L1184.500,15.300 M1174.500,20.500 L1171.500,23.500" stroke="#e4e4e4" stroke-width="1.300" fill="none"/>
  <!-- menu -->
  <g stroke="#e8e8e8" stroke-width="2.600"><line x1="1200.200" y1="11.700" x2="1220" y2="11.700"/><line x1="1200.200" y1="19.300" x2="1220" y2="19.300"/><line x1="1200.200" y1="27" x2="1220" y2="27"/></g>
</svg>


<div id="bt" class="a"></div><div id="bl" class="a"></div><div id="br" class="a"></div><div id="bb" class="a"></div>
</div>
</body>
</html>
